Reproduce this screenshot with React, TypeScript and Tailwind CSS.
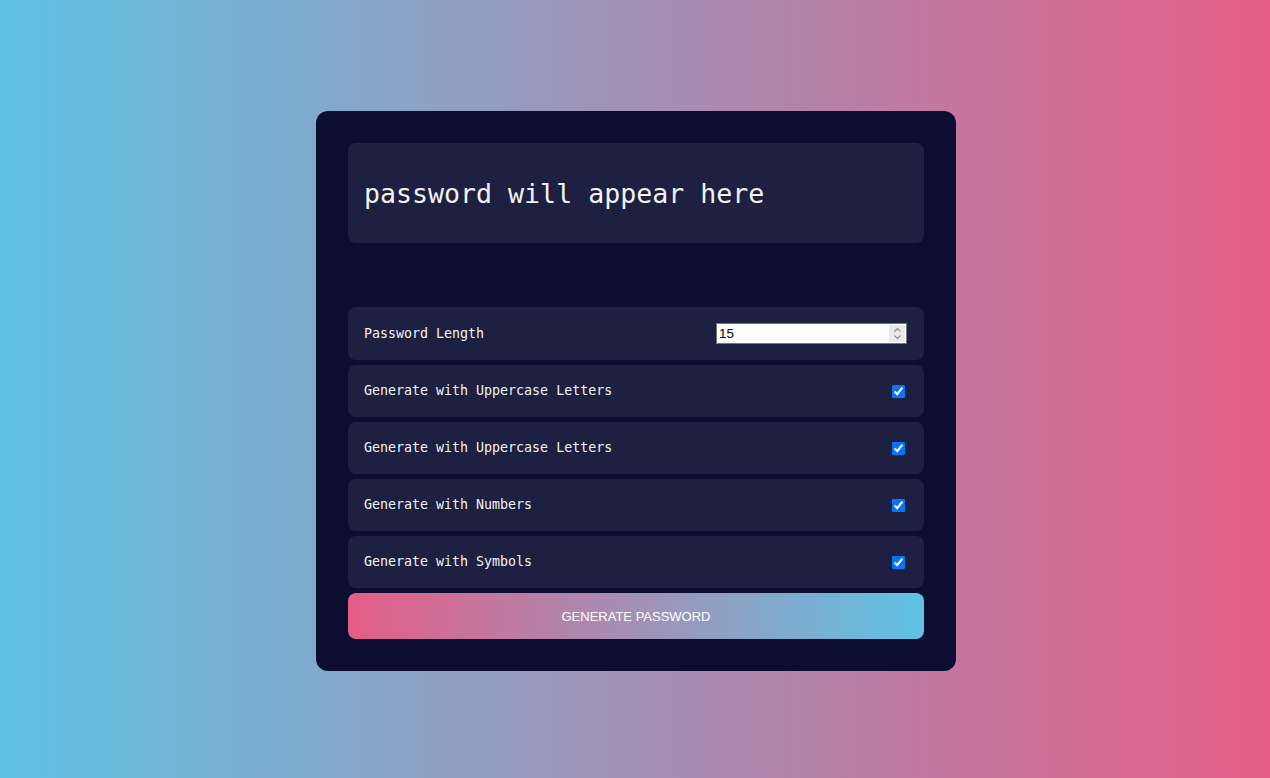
import React, { useState } from "react";

const mono = { fontFamily: '"DejaVu Sans Mono", "Liberation Mono", monospace' };

function CheckRow({ label }: { label: string }) {
  const [checked, setChecked] = useState(true);
  return (
    <div className="flex h-[51.5px] items-center justify-between rounded-[8px] bg-[#1e2041] pl-4 pr-4">
      <span className="text-[13.3px] leading-[19.5px] text-[#f2f2f2]" style={mono}>
        {label}
      </span>
      <input
        type="checkbox"
        checked={checked}
        onChange={(e) => setChecked(e.target.checked)}
        className="m-0 mr-[3px] mt-[1px] h-[13px] w-[13px] accent-[#0075ff]"
      />
    </div>
  );
}

export default function App() {
  const [len, setLen] = useState("15");
  return (
    <div className="flex h-screen min-h-[778px] w-full items-center justify-center bg-[linear-gradient(to_right,#5fc3e4,#e55d87)] pl-[2px] pt-[4px]">
      <div className="flex w-[640px] flex-col rounded-[12px] bg-[#0b0e31] p-8">
        <div className="flex h-[100px] items-center rounded-[8px] bg-[#1e2041] px-4 pt-[4px]">
          <span className="text-[26.6px] leading-none text-[#f2f2f2]" style={mono}>
            password will appear here
          </span>
        </div>
        <div className="mt-16 flex flex-col gap-[5.5px]">
          <div className="flex h-[53px] items-center justify-between rounded-[8px] bg-[#1e2041] pl-4 pr-4">
            <span className="text-[13.3px] leading-[19.5px] text-[#f2f2f2]" style={mono}>
              Password Length
            </span>
            <div className="relative mr-[1px] h-[21px] w-[191px]">
              <input
                type="text"
                value={len}
                onChange={(e) => setLen(e.target.value)}
                className="block h-full w-full border border-[#767676] bg-white pl-[2px] pr-[22px] text-[13.3px] text-black outline-none"
                style={{ fontFamily: '"Liberation Sans", Arial, sans-serif' }}
              />
              <div className="absolute right-[2px] top-[2px] flex h-[17px] w-[16px] flex-col items-center justify-center bg-[#e9e9ed]">
                <svg width="9" height="13" viewBox="0 0 9 13" fill="none" stroke="#8a8a8e" strokeWidth="1.1">
                  <path d="M1.5 4.5 L4.5 1.5 L7.5 4.5" />
                  <path d="M1.5 8.5 L4.5 11.5 L7.5 8.5" />
                </svg>
              </div>
            </div>
          </div>
          <CheckRow label="Generate with Uppercase Letters" />
          <CheckRow label="Generate with Uppercase Letters" />
          <CheckRow label="Generate with Numbers" />
          <CheckRow label="Generate with Symbols" />
          <button
            className="flex h-[46px] items-center justify-center rounded-[8px] bg-[linear-gradient(to_right,#e55d87,#5fc3e4)] text-[13px] text-white"
            style={{ fontFamily: '"Liberation Sans", Arial, sans-serif' }}
          >
            GENERATE PASSWORD
          </button>
        </div>
      </div>
    </div>
  );
}
